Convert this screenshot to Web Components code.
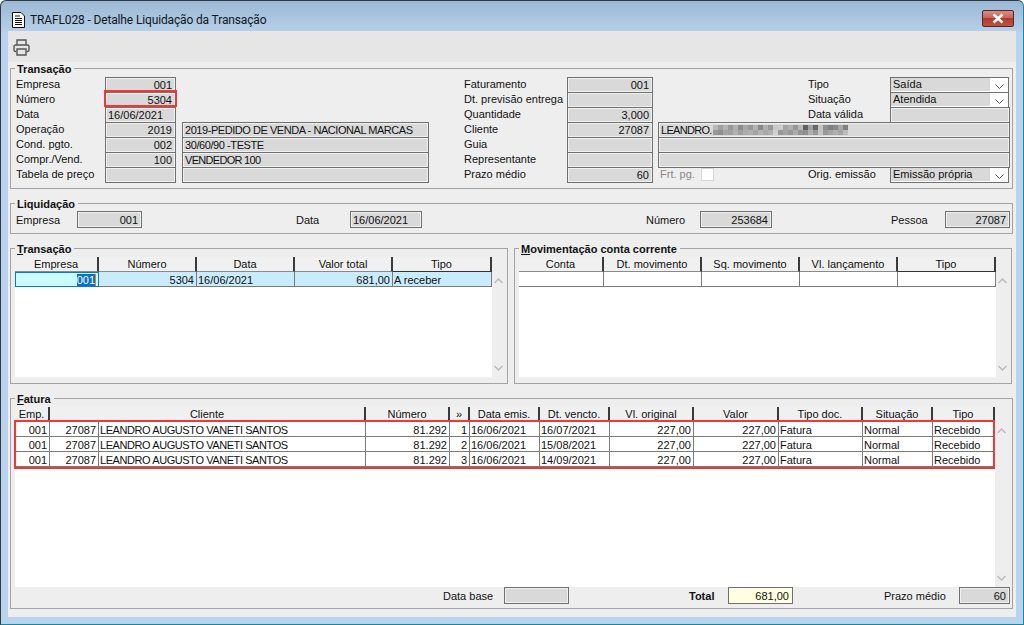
<!DOCTYPE html>
<html lang="pt">
<head>
<meta charset="utf-8">
<title>TRAFL028</title>
<style>
  html, body { margin: 0; padding: 0; background: #fff; }
  body { font: 11px "Liberation Sans", Arial, sans-serif; color: #111; }
  .trans { display: grid; grid-template-columns: 89px 71px 6px 247px 35px 103px 86px 5px 150px 82px 120px; grid-auto-rows: 15px; line-height: 15px; }
  .trans > .c1 { grid-column: 1; }
  .trans > .c2 { grid-column: 2; }
  .trans > .c4 { grid-column: 4; }
  .trans > .c6 { grid-column: 6; }
  .trans > .c7 { grid-column: 7; }
  .trans > .c10 { grid-column: 10; }
  .trans > .c11 { grid-column: 11; }
  .trans > .wide { grid-column: 9 / 12; }
  .liq { display: grid; grid-template-columns: 61px 65px 154px 54px 72px 224px 54px 72px 119px 54px 65px; height: 17px; align-items: center; }
  .two { display: grid; grid-template-columns: 496px 498px; column-gap: 8px; }
  .foot { display: grid; grid-template-columns: 427px 61px 65px 120px 39px 65px 91px 75px 51px; height: 17px; align-items: center; }
  .b { font-weight: bold; }
  .check { grid-column: 9; display: flex; align-items: center; gap: 6px; color: #888; padding-left: 2px; }
  .caps { letter-spacing: -.42px; }
  .caps-x { letter-spacing: -.45px; }
  .caps-y { letter-spacing: -.7px; }
</style>
</head>
<body>

<erp-window>
  <erp-titlebar slot="title">TRAFL028 - Detalhe Liquidação da Transação</erp-titlebar>
  <erp-toolbar slot="tools"></erp-toolbar>

  <erp-group>
    <span slot="legend">Transação</span>
    <div class="trans">
      <span class="c1" style="grid-row:1">Empresa</span><erp-field class="c2" style="grid-row:1" align="r">001</erp-field>
      <span class="c6" style="grid-row:1">Faturamento</span><erp-field class="c7" style="grid-row:1" align="r">001</erp-field>
      <span class="c10" style="grid-row:1">Tipo</span><erp-combo class="c11" style="grid-row:1">Saída</erp-combo>

      <span class="c1" style="grid-row:2">Número</span><erp-field class="c2" style="grid-row:2" align="r" marked>5304</erp-field>
      <span class="c6" style="grid-row:2">Dt. previsão entrega</span><erp-field class="c7" style="grid-row:2"></erp-field>
      <span class="c10" style="grid-row:2">Situação</span><erp-combo class="c11" style="grid-row:2">Atendida</erp-combo>

      <span class="c1" style="grid-row:3">Data</span><erp-field class="c2" style="grid-row:3">16/06/2021</erp-field>
      <span class="c6" style="grid-row:3">Quantidade</span><erp-field class="c7" style="grid-row:3" align="r">3,000</erp-field>
      <span class="c10" style="grid-row:3">Data válida</span><erp-field class="c11" style="grid-row:3"></erp-field>

      <span class="c1" style="grid-row:4">Operação</span><erp-field class="c2" style="grid-row:4" align="r">2019</erp-field>
      <erp-field class="c4 caps-x" style="grid-row:4">2019-PEDIDO DE VENDA - NACIONAL MARCAS</erp-field>
      <span class="c6" style="grid-row:4">Cliente</span><erp-field class="c7" style="grid-row:4" align="r">27087</erp-field>
      <erp-field class="wide caps-y" style="grid-row:4">LEANDRO.<erp-blur></erp-blur></erp-field>

      <span class="c1" style="grid-row:5">Cond. pgto.</span><erp-field class="c2" style="grid-row:5" align="r">002</erp-field>
      <erp-field class="c4 caps" style="grid-row:5">30/60/90 -TESTE</erp-field>
      <span class="c6" style="grid-row:5">Guia</span><erp-field class="c7" style="grid-row:5"></erp-field>
      <erp-field class="wide" style="grid-row:5"></erp-field>

      <span class="c1" style="grid-row:6">Compr./Vend.</span><erp-field class="c2" style="grid-row:6" align="r">100</erp-field>
      <erp-field class="c4 caps-y" style="grid-row:6">VENDEDOR 100</erp-field>
      <span class="c6" style="grid-row:6">Representante</span><erp-field class="c7" style="grid-row:6"></erp-field>
      <erp-field class="wide" style="grid-row:6"></erp-field>

      <span class="c1" style="grid-row:7">Tabela de preço</span><erp-field class="c2" style="grid-row:7"></erp-field>
      <erp-field class="c4" style="grid-row:7"></erp-field>
      <span class="c6" style="grid-row:7">Prazo médio</span><erp-field class="c7" style="grid-row:7" align="r">60</erp-field>
      <span class="check" style="grid-row:7">Frt. pg. <erp-check></erp-check></span>
      <span class="c10" style="grid-row:7">Orig. emissão</span><erp-combo class="c11" style="grid-row:7">Emissão própria</erp-combo>
    </div>
  </erp-group>

  <erp-group style="--pad-top:1px;--pad-bottom:5px">
    <span slot="legend">Liquidação</span>
    <div class="liq">
      <span>Empresa</span><erp-field align="r" tall>001</erp-field>
      <span style="grid-column:4">Data</span><erp-field style="grid-column:5" tall>16/06/2021</erp-field>
      <span style="grid-column:7">Número</span><erp-field style="grid-column:8" align="r" tall>253684</erp-field>
      <span style="grid-column:10">Pessoa</span><erp-field style="grid-column:11" align="r" tall>27087</erp-field>
    </div>
  </erp-group>

  <div class="two">
    <erp-group>
      <span slot="legend"><u>T</u>ransação</span>
      <erp-grid cols="84px 98px 98px 98px 99px" rows="105">
        <erp-head>Empresa</erp-head><erp-head>Número</erp-head><erp-head>Data</erp-head><erp-head>Valor total</erp-head><erp-head>Tipo</erp-head>
        <erp-row slot="rows" selected>
          <erp-cell align="r" focus>001</erp-cell><erp-cell align="r">5304</erp-cell><erp-cell>16/06/2021</erp-cell><erp-cell align="r">681,00</erp-cell><erp-cell>A receber</erp-cell>
        </erp-row>
      </erp-grid>
    </erp-group>
    <erp-group>
      <span slot="legend"><u>M</u>ovimentação conta corrente</span>
      <erp-grid cols="85px 98px 98px 98px 98px" rows="105">
        <erp-head>Conta</erp-head><erp-head>Dt. movimento</erp-head><erp-head>Sq. movimento</erp-head><erp-head>Vl. lançamento</erp-head><erp-head>Tipo</erp-head>
        <erp-row slot="rows">
          <erp-cell></erp-cell><erp-cell></erp-cell><erp-cell></erp-cell><erp-cell></erp-cell><erp-cell></erp-cell>
        </erp-row>
      </erp-grid>
    </erp-group>
  </div>

  <erp-group style="--pad-bottom:4px">
    <span slot="legend"><u>F</u>atura</span>
    <erp-grid cols="35px 49px 267px 84px 20px 70px 70px 84px 85px 84px 70px 62px" rows="165">
      <erp-head>Emp.</erp-head><erp-head span="2">Cliente</erp-head><erp-head>Número</erp-head><erp-head>»</erp-head><erp-head>Data emis.</erp-head><erp-head>Dt. vencto.</erp-head><erp-head>Vl. original</erp-head><erp-head>Valor</erp-head><erp-head>Tipo doc.</erp-head><erp-head>Situação</erp-head><erp-head>Tipo</erp-head>
      <erp-rowset slot="rows">
        <erp-row>
          <erp-cell align="r">001</erp-cell><erp-cell align="r">27087</erp-cell><erp-cell class="caps">LEANDRO AUGUSTO VANETI SANTOS</erp-cell><erp-cell align="r">81.292</erp-cell><erp-cell align="r">1</erp-cell><erp-cell>16/06/2021</erp-cell><erp-cell>16/07/2021</erp-cell><erp-cell align="r">227,00</erp-cell><erp-cell align="r">227,00</erp-cell><erp-cell>Fatura</erp-cell><erp-cell>Normal</erp-cell><erp-cell>Recebido</erp-cell>
        </erp-row>
        <erp-row>
          <erp-cell align="r">001</erp-cell><erp-cell align="r">27087</erp-cell><erp-cell class="caps">LEANDRO AUGUSTO VANETI SANTOS</erp-cell><erp-cell align="r">81.292</erp-cell><erp-cell align="r">2</erp-cell><erp-cell>16/06/2021</erp-cell><erp-cell>15/08/2021</erp-cell><erp-cell align="r">227,00</erp-cell><erp-cell align="r">227,00</erp-cell><erp-cell>Fatura</erp-cell><erp-cell>Normal</erp-cell><erp-cell>Recebido</erp-cell>
        </erp-row>
        <erp-row>
          <erp-cell align="r">001</erp-cell><erp-cell align="r">27087</erp-cell><erp-cell class="caps">LEANDRO AUGUSTO VANETI SANTOS</erp-cell><erp-cell align="r">81.292</erp-cell><erp-cell align="r">3</erp-cell><erp-cell>16/06/2021</erp-cell><erp-cell>14/09/2021</erp-cell><erp-cell align="r">227,00</erp-cell><erp-cell align="r">227,00</erp-cell><erp-cell>Fatura</erp-cell><erp-cell>Normal</erp-cell><erp-cell>Recebido</erp-cell>
        </erp-row>
      </erp-rowset>
    </erp-grid>
    <div class="foot">
      <span style="grid-column:2">Data base</span><erp-field style="grid-column:3" tall></erp-field>
      <span class="b" style="grid-column:5">Total</span><erp-field style="grid-column:6" align="r" tall yellow>681,00</erp-field>
      <span style="grid-column:8">Prazo médio</span><erp-field style="grid-column:9" align="r" tall>60</erp-field>
    </div>
  </erp-group>
</erp-window>

<script>
function shadow(el, html) {
  el.attachShadow({ mode: 'open' }).innerHTML = html;
}

class ErpWindow extends HTMLElement {
  connectedCallback() {
    shadow(this, `
      <style>
        :host { display: flex; flex-direction: column; width: 1024px; height: 625px; box-sizing: border-box;
          border: 1px solid #2f3a44; border-bottom-color: #14899b; border-right-color: #14899b; border-radius: 6px 6px 0 0;
          background: linear-gradient(#9bb8d4 0, #b8d0e9 31px, #b9d3ee 31px); overflow: hidden; }
        .client { margin: 0 7px 7px 7px; flex: 1; min-height: 0; display: flex; flex-direction: column; background: #eeeeee; }
        .body { display: flex; flex-direction: column; gap: 8px; padding: 0 4px 0 2px; }
      </style>
      <slot name="title"></slot>
      <div class="client">
        <slot name="tools"></slot>
        <div class="body"><slot></slot></div>
      </div>`);
  }
}

class ErpTitlebar extends HTMLElement {
  connectedCallback() {
    shadow(this, `
      <style>
        :host { display: flex; flex: none; align-items: center; box-sizing: border-box; height: 30px; padding: 7px 9px 0 11px; gap: 5px; color: #101820; font: 12px Roboto, "Liberation Sans", sans-serif; letter-spacing: -.14px; }
        .text { flex: 1; }
        .close { align-self: flex-start; width: 32px; height: 17px; box-sizing: border-box; border: 1px solid #4a2a2a; border-radius: 2px; margin-top: 2px;
          background: linear-gradient(#d88d80 0, #c9645a 45%, #b53a2c 50%, #c0543f 100%); display: flex; align-items: center; justify-content: center; }
      </style>
      <svg width="13" height="16" viewBox="0 0 13 16">
        <path d="M.5.5H9L12.5 4V15.5H.5Z" fill="#fff" stroke="#111"/>
        <path d="M3 4H8M3 6.500H10M3 8.500H10M3 10.500H10M3 12.500H10" stroke="#111" stroke-width="1.200"/>
      </svg>
      <span class="text"><slot></slot></span>
      <span class="close">
        <svg width="14" height="11" viewBox="0 0 14 11"><path d="M2.500 1.500 11.500 9.500M11.500 1.500 2.500 9.500" stroke="#fff" stroke-width="2.600"/></svg>
      </span>`);
  }
}

class ErpToolbar extends HTMLElement {
  connectedCallback() {
    shadow(this, `
      <style>
        :host { display: flex; flex: none; align-items: center; height: 31px; padding-left: 5px; background: #e6e6e6; }
        svg { margin-top: 2px; }
      </style>
      <svg width="17" height="17" viewBox="0 0 17 17" fill="none" stroke="#555" stroke-width="1.400">
        <path d="M4 6V1H13V6"/>
        <path d="M3.500 12.500H2.500A1.500 1.500 0 0 1 1 11V7.500A1.500 1.500 0 0 1 2.500 6H14.500A1.500 1.500 0 0 1 16 7.500V11A1.500 1.500 0 0 1 14.500 12.500H13.500"/>
        <path d="M4 10H13V16H4Z"/>
      </svg>`);
  }
}

class ErpGroup extends HTMLElement {
  connectedCallback() {
    shadow(this, `
      <style>
        :host { display: block; }
        fieldset { margin: 0; padding: var(--pad-top, 2px) 2px var(--pad-bottom, 6px) 5px; border: 1px solid #a4a4a4; }
        legend { padding: 0 3px 0 2px; margin-left: -1px; font-weight: bold; line-height: 15px; height: 13px; }
      </style>
      <fieldset>
        <legend><slot name="legend"></slot></legend>
        <slot></slot>
      </fieldset>`);
  }
}

class ErpField extends HTMLElement {
  connectedCallback() {
    const right = this.getAttribute('align') === 'r';
    const tall = this.hasAttribute('tall');
    const yellow = this.hasAttribute('yellow');
    shadow(this, `
      <style>
        :host { display: block; box-sizing: border-box; height: ${tall ? 17 : 16}px; border: 1px solid #707070; position: relative;
          background: ${yellow ? '#ffffe1' : '#d9d9d9'}; box-shadow: inset 0 0 0 1px ${yellow ? '#ffffe1' : '#f0f0f0'};
          text-align: ${right ? 'right' : 'left'}; }
        :host([marked]) { z-index: 1; }
        .txt { display: block; height: 100%; overflow: hidden; white-space: nowrap; padding: 0 3px 0 2px; line-height: ${tall ? 17 : 15}px; }
        .mark { position: absolute; left: -2px; right: -2px; top: -3px; bottom: 0; border: 2px solid #f33636; }
      </style>
      <span class="txt"><slot></slot></span>
      ${this.hasAttribute('marked') ? '<i class="mark"></i>' : ''}`);
  }
}

class ErpCombo extends HTMLElement {
  connectedCallback() {
    shadow(this, `
      <style>
        :host { display: flex; box-sizing: border-box; height: 16px; border: 1px solid #707070; background: #fff; line-height: 12px; margin-right: 1px; }
        .text { flex: 1; background: #d9d9d9; padding: 0 2px; margin: 0 0 1px 0; white-space: nowrap; overflow: hidden; }
        .btn { width: 18px; display: flex; align-items: center; justify-content: center; padding-top: 3px; }
      </style>
      <span class="text"><slot></slot></span>
      <span class="btn"><svg width="9" height="5" viewBox="0 0 9 5"><path d="M.5.500 4.500 4.500 8.500.500" fill="none" stroke="#555"/></svg></span>`);
  }
}

class ErpCheck extends HTMLElement {
  connectedCallback() {
    shadow(this, `
      <style>
        :host { display: inline-block; width: 13px; height: 13px; box-sizing: border-box; background: #fff; border: 1px solid #d6d6d6; }
      </style>`);
  }
}

// bloco pixelado por cima do nome do cliente
class ErpBlur extends HTMLElement {
  connectedCallback() {
    const top = ['b8','a0','b4','98','b0','8c','a8','98','b4','88','b0','98','c8','cc','a4','b0','98','b8','60','a0','68','c4','90','80','88','a8','80'];
    const bottom = ['98','90','a4','a0','b0','a0','ac','b0','a4','b4','a8','b0','d0','98','a4','98','ac','94','90','b0','98','c4','98','a4','b0','a4','bc'];
    const cells = top.concat(bottom).map(c => `<i style="background:#${c}${c}${c}"></i>`).join('');
    shadow(this, `
      <style>
        :host { display: inline-grid; vertical-align: top; margin: 2px 0 0 1px; grid-template-columns: repeat(27, 5px); grid-auto-rows: 5px; letter-spacing: 0; }
        i { display: block; }
      </style>${cells}`);
  }
}

class ErpGrid extends HTMLElement {
  connectedCallback() {
    const cols = this.getAttribute('cols');
    const rows = this.getAttribute('rows');
    shadow(this, `
      <style>
        :host { display: block; margin-left: -1px; --cols: ${cols}; }
        .wrap { display: flex; }
        .main { flex: none; width: ${cols.split(' ').reduce((a, b) => a + parseInt(b), 0)}px; }
        .head { display: grid; grid-template-columns: var(--cols); height: 15px; }
        .body { background: #fff; height: ${rows}px; }
        .bar { width: 13px; margin-top: 15px; height: ${rows}px; display: flex; flex-direction: column; justify-content: space-between; align-items: center; padding: 6px 0; box-sizing: border-box; }
      </style>
      <div class="wrap">
        <div class="main">
          <div class="head"><slot></slot></div>
          <div class="body"><slot name="rows"></slot></div>
        </div>
        <div class="bar">
          <svg width="9" height="6" viewBox="0 0 9 6"><path d="M.5 5 4.500 1 8.500 5" fill="none" stroke="#bbb" stroke-width="1.500"/></svg>
          <svg width="9" height="6" viewBox="0 0 9 6"><path d="M.5 1 4.500 5 8.500 1" fill="none" stroke="#bbb" stroke-width="1.500"/></svg>
        </div>
      </div>`);
  }
}

class ErpHead extends HTMLElement {
  connectedCallback() {
    const span = this.getAttribute('span');
    shadow(this, `
      <style>
        :host { display: block; box-sizing: border-box; text-align: center; line-height: 14px; background: #f0f0f0;
          border-right: 2px solid #3a3a3a; border-bottom: 1px solid #8a8a8a; ${span ? `grid-column: span ${span};` : ''} }
        :host(:last-of-type) { border-bottom-color: #333; }
      </style>
      <slot></slot>`);
  }
}

class ErpRowset extends HTMLElement {
  connectedCallback() {
    shadow(this, `
      <style>
        :host { display: block; position: relative; }
        .mark { position: absolute; top: -2px; bottom: -2px; left: -1px; right: 0; border: 2px solid #f33636; }
      </style>
      <slot></slot>
      <i class="mark"></i>`);
  }
}

class ErpRow extends HTMLElement {
  connectedCallback() {
    shadow(this, `
      <style>
        :host { display: grid; grid-template-columns: var(--cols); height: 15px; background: #fff; }
        :host([selected]) { background: #c8ecfb; }
      </style>
      <slot></slot>`);
  }
}

class ErpCell extends HTMLElement {
  connectedCallback() {
    const right = this.getAttribute('align') === 'r';
    const focus = this.hasAttribute('focus');
    shadow(this, `
      <style>
        :host { display: block; box-sizing: border-box; height: 15px; line-height: 16px; padding: 0 2px 0 ${right ? 2 : 1}px; white-space: nowrap; overflow: hidden;
          text-align: ${right ? 'right' : 'left'}; border-right: 1px solid #7a7a7a; border-bottom: 1px solid #7a7a7a; }
        :host([focus]) { background: #c9fbff; outline: 1px solid #0a78d7; outline-offset: -1px; padding-right: 2px; }
        mark { background: #0a6fc9; color: #fff; border-right: 1px solid #e8801a; }
      </style>
      ${focus ? '<mark><slot></slot></mark>' : '<slot></slot>'}`);
  }
}

customElements.define('erp-window', ErpWindow);
customElements.define('erp-titlebar', ErpTitlebar);
customElements.define('erp-toolbar', ErpToolbar);
customElements.define('erp-group', ErpGroup);
customElements.define('erp-field', ErpField);
customElements.define('erp-combo', ErpCombo);
customElements.define('erp-check', ErpCheck);
customElements.define('erp-blur', ErpBlur);
customElements.define('erp-grid', ErpGrid);
customElements.define('erp-head', ErpHead);
customElements.define('erp-rowset', ErpRowset);
customElements.define('erp-row', ErpRow);
customElements.define('erp-cell', ErpCell);
</script>
</body>
</html>
